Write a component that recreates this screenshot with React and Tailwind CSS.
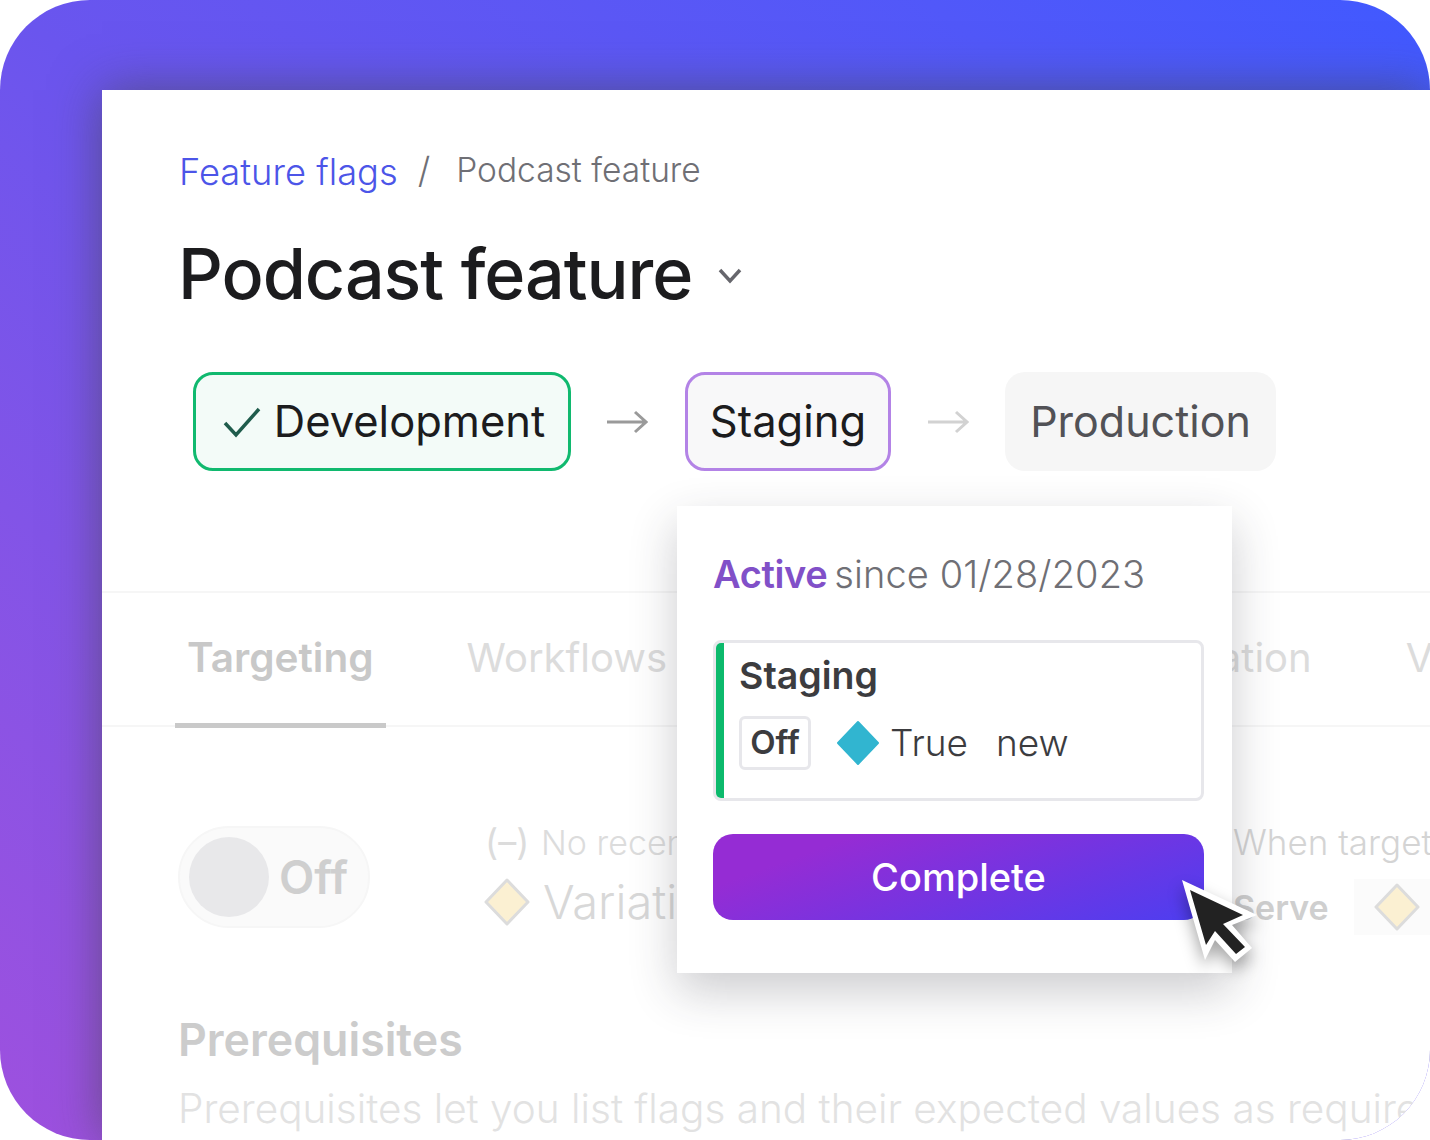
import React from 'react';

const font = "font-['Inter','Liberation_Sans',sans-serif]";

const Arrow = ({ className }) => (
    <svg className={className} width="41" height="24" viewBox="0 0 41 24" fill="none" stroke="currentColor" strokeWidth="3">
        <path d="M0 12H39M28 2L39 12L28 22" />
    </svg>
);

const Diamond = ({ className }) => (
    <svg className={className} width="46" height="48" viewBox="0 0 46 48">
        <path d="M23 2L44 24L23 46L2 24Z" fill="#fbf0d2" stroke="#dcdcdc" strokeWidth="3" strokeLinejoin="round" />
    </svg>
);

const Popover = () => (
    <div className="absolute left-[575px] top-[416px] w-[555px] h-[467px] bg-white pl-9 pr-[28px] pt-[43px] shadow-[0_18px_44px_rgba(40,40,55,0.24)]">
        <div className="flex items-baseline text-[38px] leading-[50px]">
            <span className="font-semibold text-[#8150c8] tracking-[-0.4px]">Active</span>
            <span className="ml-[7px] text-[#6f6f75] font-light tracking-[0.1px]">since 01/28/2023</span>
        </div>
        <div className="mt-[41px] h-[161px] flex rounded-lg border-[3px] border-[#e7e7eb] overflow-hidden">
            <div className="w-[8px] bg-[#0cba6c]" />
            <div className="pl-[15px] pt-[10px]">
                <div className="text-[37.5px] leading-[46px] font-semibold text-[#3c3c3f]">Staging</div>
                <div className="mt-[16px] flex items-center">
                    <span className="h-[54px] w-[72px] flex items-center justify-center rounded-md border-[3px] border-[#e7e7eb] text-[33px] font-semibold text-[#3c3c3f]">Off</span>
                    <svg className="ml-[25px]" width="44" height="46" viewBox="0 0 44 46">
                        <path d="M22 2L42 23L22 44L2 23Z" fill="#31b5d0" stroke="#31b5d0" strokeWidth="2" strokeLinejoin="round" />
                    </svg>
                    <span className="ml-[10px] text-[37px] font-light text-[#3c3c3f]">True</span>
                    <span className="ml-[28px] text-[37px] font-light text-[#3c3c3f]">new</span>
                </div>
            </div>
        </div>
        <button className="mt-[33px] h-[86px] w-[491px] rounded-[20px] bg-[linear-gradient(160deg,#952cd4_20%,#4d3ef0_100%)] text-[38px] text-white font-medium">
            Complete
        </button>
    </div>
);

const Cursor = () => (
    <svg className="absolute left-[1068px] top-[780px] drop-shadow-[0_8px_8px_rgba(0,0,0,0.35)]" width="100" height="105" viewBox="0 0 100 105">
        <path d="M12 10L87 45L62 55L82 78L65 92L45 70L35 90Z" fill="#fff" />
        <path d="M20 20L73 45L53 54L75 77L66 84L45 61L36 75Z" fill="#222" />
    </svg>
);

const App = () => {
    return (
        <div className={`${font} w-[1430px] h-[1140px] bg-white`}>
            <div className="w-full h-full rounded-[90px] overflow-hidden bg-gradient-to-tr from-[#9e50de] via-[#6a55ee] to-[#4059ff] pl-[102px] pt-[90px]">
                <div className="relative h-[1050px] bg-white shadow-[0_0_46px_rgba(70,70,70,0.6)]">
                    <div className="h-[1050px] overflow-hidden">
                        <div className="pl-[77px] pt-[54px] flex items-start">
                            <span className="text-[36.3px] leading-[56px] text-[#4c55e8] font-light">Feature flags</span>
                            <span className="ml-[20px] text-[36px] leading-[52px] text-[#6f6f75] font-light">/</span>
                            <span className="ml-[26px] text-[33.5px] leading-[52px] text-[#6f6f75] font-light">Podcast feature</span>
                        </div>

                        <div className="pl-[76px] mt-[31px] flex items-center">
                            <h1 className="text-[70px] leading-[85px] font-medium tracking-[-1.05px] text-[#1c1c1e]">Podcast feature</h1>
                            <svg className="ml-[26px] mt-[4px]" width="24" height="16" viewBox="0 0 24 16" fill="none" stroke="#66666c" strokeWidth="3.5">
                                <path d="M2 2L12 13L22 2" />
                            </svg>
                        </div>

                        <div className="pl-[91px] mt-[56px] flex items-center text-[43.5px]">
                            <div className="h-[99px] w-[378px] flex items-center justify-center rounded-[20px] border-[3px] border-[#10b96f] bg-[#f3fbf8] text-[#1c1c1e]">
                                <svg className="ml-[4px] mr-[13px] mt-[1px]" width="38" height="32" viewBox="0 0 38 32" fill="none">
                                    <path d="M2 17L13 29L36 3" stroke="#1f5c4c" strokeWidth="3.5" />
                                </svg>
                                Development
                            </div>
                            <Arrow className="ml-[36px] text-[#9a9a9a]" />
                            <div className="ml-[37px] h-[99px] w-[206px] flex items-center justify-center rounded-[20px] border-[3px] border-[#b383e6] bg-[#f8f8f9] text-[#1c1c1e]">
                                Staging
                            </div>
                            <Arrow className="ml-[37px] text-[#d2d2d2]" />
                            <div className="ml-[36px] h-[99px] w-[271px] flex items-center justify-center rounded-[20px] bg-[#f6f6f6] text-[43px] text-[#525256]">
                                Production
                            </div>
                        </div>

                        <div className="mt-[120px] h-[136px] border-y-2 border-[#f6f6f6] flex pl-[73px] text-[40px] text-[#dcdcdc] whitespace-nowrap">
                            <div className="h-[135px] px-[12px] pt-[35px] border-b-[5px] border-[#c9c9c9] text-[40.5px] font-semibold text-[#c8c8c8]">Targeting</div>
                            <div className="ml-[68px] px-[13px] pt-[35px]">Workflows</div>
                            <div className="ml-[68px] px-[13px] pt-[35px]">Insights</div>
                            <div className="ml-[120px] px-[13px] pt-[35px]">Configuration</div>
                            <div className="ml-[68px] px-[13px] pt-[35px]">Variations</div>
                        </div>

                        <div className="mt-[99px] flex pl-[76px] whitespace-nowrap">
                            <div className="w-[192px] h-[102px] rounded-full bg-[#fafafa] border-2 border-[#f6f6f6] flex items-center pl-[9px] shrink-0">
                                <span className="w-[80px] h-[80px] rounded-full bg-[#e8e8ea]" />
                                <span className="ml-[10px] text-[46px] font-semibold text-[#cfcfcf]">Off</span>
                            </div>
                            <div className="ml-[114px] w-[749px] shrink-0">
                                <div className="-mt-[2px] flex items-center h-[36px] text-[34px] text-[#dcdcdc] font-light">
                                    <span className="ml-[1px] w-[56px] text-[36px] font-normal">(–)</span>
                                    No recent activity
                                </div>
                                <div className="mt-[14px] flex items-center h-[56px]">
                                    <Diamond />
                                    <span className="ml-[13px] text-[47px] text-[#d8d8d8] font-light">Variation</span>
                                </div>
                            </div>
                            <div>
                                <div className="-mt-[2px] h-[36px] leading-[36px] text-[35px] text-[#d4d4d4] font-light">When targeting is on</div>
                                <div className="mt-[19px] flex items-center">
                                    <span className="text-[34px] font-semibold text-[#cfcfcf]">Serve</span>
                                    <span className="ml-[25px] w-[90px] h-[56px] bg-[#fbfbfb] pl-[20px] flex items-center"><Diamond /></span>
                                </div>
                            </div>
                        </div>

                        <div className="mt-[78px] pl-[76px] text-[44.7px] leading-[54px] font-semibold text-[#cccccc]">Prerequisites</div>
                        <div className="mt-[17px] pl-[76px] text-[40.5px] leading-[50px] text-[#e2e2e2] font-light whitespace-nowrap">
                            Prerequisites let you list flags and their expected values as required
                        </div>
                    </div>
                    <Popover />
                    <Cursor />
                </div>
            </div>
        </div>
    );
};

export default App;
